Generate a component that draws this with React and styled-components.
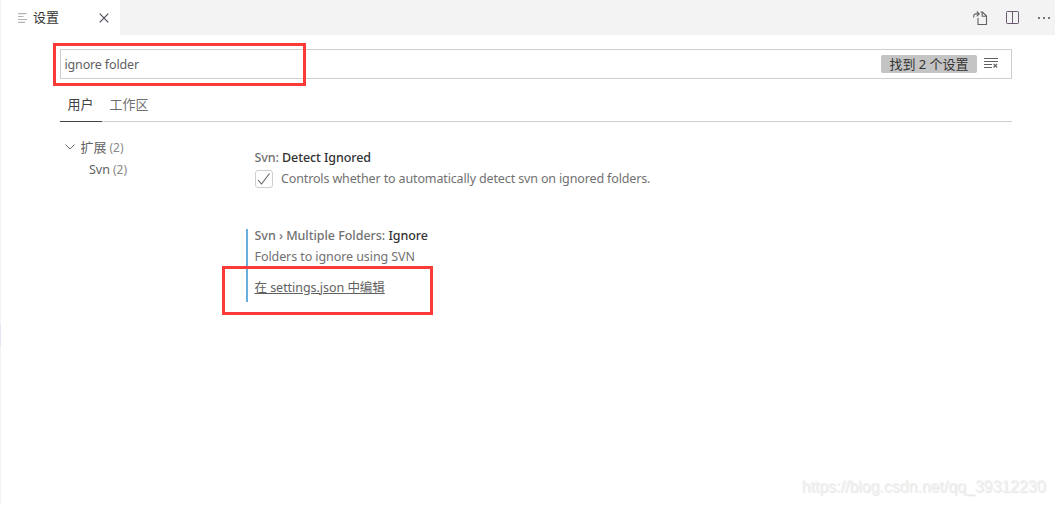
import styled, { createGlobalStyle } from "styled-components";

const App = () => {
  return (
    <Window>
      <GlobalStyle />
      <EdgeMark />
      <TabBar>
        <Tab>
          <svg width="10" height="10" viewBox="0 0 10 10" stroke="#b4b4b4" strokeWidth="1.2">
            <path d="M0 .6h8.500M0 3.500h5.500M0 6.500h9M0 9.400h7" />
          </svg>
          <TabLabel>设置</TabLabel>
          <svg width="10" height="10" viewBox="0 0 10 10" stroke="#4a4250" strokeWidth="1.1">
            <path d="M.7 .7l8.600 8.600M9.300 .7l-8.600 8.600" />
          </svg>
        </Tab>
        <Actions>
          <OpenJsonIcon />
          <SplitIcon />
          <MoreIcon />
        </Actions>
      </TabBar>
      <Editor>
        <Search>
          <Query>ignore folder</Query>
          <Count>找到 2 个设置</Count>
          <ClearIcon />
          <Highlight $top={-7} $left={-8} $width={253} $height={43} />
        </Search>
        <Scopes>
          <Scope $active>用户</Scope>
          <Scope>工作区</Scope>
        </Scopes>
        <Content>
          <Toc>
            <TocRow>
              <svg width="10" height="6" viewBox="0 0 10 6" fill="none" stroke="#6c6c6c">
                <path d="M.5 .5L5 5l4.500-4.500" />
              </svg>
              <Group>扩展</Group>
              <Muted>(2)</Muted>
            </TocRow>
            <TocRow $nested>
              <span>Svn</span>
              <Muted>(2)</Muted>
            </TocRow>
          </Toc>
          <Settings>
            <Setting>
              <Title $spacing="-0.08px">
                Svn: <b>Detect Ignored</b>
              </Title>
              <CheckRow>
                <Checkbox>
                  <svg width="14" height="14" viewBox="0 0 14 14" fill="none" stroke="#616161" strokeWidth="1.1">
                    <path d="M1 8l3.500 4L12.500 1.500" />
                  </svg>
                </Checkbox>
                <Description $spacing="-0.135px">
                  Controls whether to automatically detect svn on ignored folders.
                </Description>
              </CheckRow>
            </Setting>
            <Setting $modified>
              <Title $spacing="-0.04px">
                Svn › Multiple Folders: <b>Ignore</b>
              </Title>
              <Description $spacing="-0.08px">Folders to ignore using SVN</Description>
              <EditLink>在 settings.json 中编辑</EditLink>
              <Highlight $top={37} $left={-26} $width={211} $height={49} />
            </Setting>
          </Settings>
        </Content>
      </Editor>
      <Watermark>https://blog.csdn.net/qq_39312230</Watermark>
    </Window>
  );
};

const OpenJsonIcon = () => (
  <svg width="16" height="16" viewBox="0 0 16 16" fill="none" stroke="#616161" strokeWidth="1.1">
    <path d="M6 8v6.500h8.500V6L10.500 2h-2M10.200 2v4.300h4.300" />
    <path d="M2 7.500C1 5 2.300 3.900 4.300 3.900h2.500M4.800 1.500l2.400 2.400-2.400 2.400" />
  </svg>
);

const SplitIcon = () => (
  <svg width="14" height="14" viewBox="0 0 14 14" fill="none" stroke="#6b5c72">
    <rect x=".5" y=".5" width="12" height="12" rx=".7" />
    <path d="M6.500 .5v12" />
  </svg>
);

const MoreIcon = () => (
  <svg width="14" height="4" viewBox="0 0 14 4" fill="#777">
    <path d="M0 1h2v2H0zM5 1h2v2H5zM10 1h2v2h-2z" />
  </svg>
);

const ClearIcon = () => (
  <svg width="15" height="14" viewBox="0 0 15 14" fill="none" stroke="#616161">
    <path d="M0 1.500h14M0 4.500h14M0 7.500h8M0 10.500h8" />
    <path d="M9.500 6.900l3.600 3.600M13.100 6.900l-3.600 3.600" strokeWidth="1.200" />
  </svg>
);

const GlobalStyle = createGlobalStyle`
  body {
    margin: 0;
    background: #fff;
    font-family: "Noto Sans", "Noto Sans CJK SC", sans-serif;
    font-size: 12.5px;
    color: #616161;
  }
  svg {
    display: block;
    flex: none;
  }
`;

const Window = styled.div`
  position: relative;
  box-sizing: border-box;
  width: 1055px;
  height: 505px;
  border-left: 1px solid #f3f3f3;
  white-space: nowrap;
`;

const EdgeMark = styled.div`
  position: absolute;
  left: -1px;
  top: 324px;
  width: 1px;
  height: 22px;
  background: #e4e4f5;
`;

const TabBar = styled.div`
  display: flex;
  justify-content: space-between;
  height: 35px;
  background: #f3f3f3;
`;

const Tab = styled.div`
  display: flex;
  align-items: center;
  box-sizing: border-box;
  width: 119px;
  padding: 1px 11px 0 17px;
  background: #fff;
`;

const TabLabel = styled.span`
  flex: 1;
  padding: 0 0 3px 5px;
  font-size: 13px;
  color: #333;
`;

const Actions = styled.div`
  display: flex;
  align-items: center;
  gap: 18px;
  padding-right: 3px;
`;

const Editor = styled.div`
  width: 952px;
  padding: 14px 0 0 59px;
`;

const Search = styled.div`
  position: relative;
  display: flex;
  align-items: center;
  box-sizing: border-box;
  height: 30px;
  padding: 0 12px 0 3.5px;
  border: 1px solid #cecece;
`;

const Query = styled.span`
  flex: 1;
  letter-spacing: -0.15px;
`;

const Count = styled.span`
  box-sizing: border-box;
  width: 96px;
  height: 18px;
  margin-right: 7px;
  border-radius: 2px;
  background: #c4c4c4;
  color: #333;
  font-size: 13px;
  line-height: 18px;
  text-align: center;
`;

const Highlight = styled.div`
  position: absolute;
  box-sizing: border-box;
  top: ${(props) => props.$top}px;
  left: ${(props) => props.$left}px;
  width: ${(props) => props.$width}px;
  height: ${(props) => props.$height}px;
  border: 3px solid #fc3a38;
`;

const Scopes = styled.div`
  display: flex;
  height: 42px;
  border-bottom: 1px solid #cecece;
`;

const Scope = styled.div`
  padding: 0 8.5px 0 7.5px;
  font-size: 13px;
  line-height: 51px;
  height: 42px;
  color: ${(props) => (props.$active ? "#424242" : "#6f6f6f")};
  border-bottom: 1px solid ${(props) => (props.$active ? "#424242" : "transparent")};
`;

const Content = styled.div`
  display: flex;
  padding-top: 14px;
`;

const Toc = styled.div`
  width: 186px;
`;

const TocRow = styled.div`
  display: flex;
  align-items: center;
  height: 22px;
  padding-left: ${(props) => (props.$nested ? 29 : 5)}px;
  svg {
    margin-right: 5.5px;
  }
`;

const Group = styled.span`
  padding-bottom: 2px;
  font-size: 13px;
`;

const Muted = styled.span`
  margin-left: 3px;
  font-size: 12px;
  color: #8a8a8a;
`;

const Settings = styled.div`
  padding-top: 15px;
`;

const Setting = styled.div`
  position: relative;
  box-sizing: border-box;
  height: ${(props) => (props.$modified ? 73 : 78)}px;
  padding-left: 6.5px;
  border-left: 2px solid ${(props) => (props.$modified ? "#66afe0" : "transparent")};
`;

const Title = styled.div`
  margin-bottom: 6px;
  line-height: 13px;
  font-weight: 500;
  color: #717171;
  letter-spacing: ${(props) => props.$spacing};
  b {
    font-weight: 500;
    color: #333;
  }
`;

const CheckRow = styled.div`
  display: flex;
  gap: 8.5px;
`;

const Checkbox = styled.div`
  display: flex;
  align-items: center;
  justify-content: center;
  box-sizing: border-box;
  width: 18px;
  height: 18px;
  border: 1px solid #cecece;
  border-radius: 3px;
`;

const Description = styled.div`
  line-height: 18px;
  color: #717171;
  letter-spacing: ${(props) => props.$spacing};
`;

const EditLink = styled.a`
  display: block;
  margin-top: 13px;
  line-height: 18px;
  letter-spacing: -0.04px;
  text-decoration: underline;
`;

const Watermark = styled.div`
  position: absolute;
  right: 9.5px;
  bottom: 8px;
  font-family: "Liberation Sans", sans-serif;
  font-size: 16px;
  line-height: 20px;
  letter-spacing: -0.05px;
  color: #f1f1f1;
  text-shadow: 1px 1px 1px #e4e4e4;
`;

export default App;
